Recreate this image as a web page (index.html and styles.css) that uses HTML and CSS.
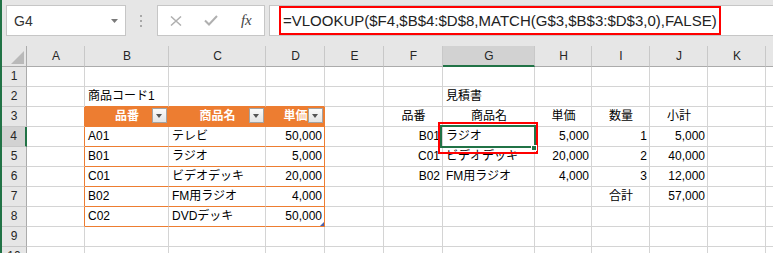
FILE: index.html
```html
<!DOCTYPE html>
<html lang="ja">
<head>
  <meta charset="UTF-8">
  <title>VLOOKUP MATCH</title>
  <link rel="stylesheet" href="styles.css">
</head>
<body>
  <div class="fbar">
    <div class="namebox">
      <span>G4</span>
      <svg width="7" height="4" viewBox="0 0 7 4"><polygon points="0,0 7,0 3.5,4" fill="#7a7a7a"/></svg>
    </div>
    <div class="grip">
      <svg width="3" height="12" viewBox="0 0 3 12"><rect x="0" y="0" width="2" height="2" fill="#a8a8a8"/><rect x="0" y="5" width="2" height="2" fill="#a8a8a8"/><rect x="0" y="10" width="2" height="2" fill="#a8a8a8"/></svg>
    </div>
    <div class="fbtns">
      <span><svg width="12" height="10" viewBox="0 0 12 10"><path d="M1 0.5 L11 9.5 M11 0.5 L1 9.5" stroke="#b0b0b0" stroke-width="1.5" fill="none"/></svg></span>
      <span><svg width="14" height="11" viewBox="0 0 14 11"><path d="M1 5.5 L5 9.5 L13 1" stroke="#b0b0b0" stroke-width="2" fill="none"/></svg></span>
      <span class="fx">fx</span>
    </div>
    <div class="finput">
      <div class="formula">=VLOOKUP($F4,$B$4:$D$8,MATCH(G$3,$B$3:$D$3,0),FALSE)</div>
    </div>
  </div>

  <div class="sheet">
    <div class="cell corner"><svg width="13" height="13" viewBox="0 0 13 13"><polygon points="13,0 13,13 0,13" fill="#b9b9b9"/></svg></div>
    <div class="cell hd">A</div><div class="cell hd">B</div><div class="cell hd">C</div><div class="cell hd">D</div><div class="cell hd">E</div><div class="cell hd">F</div><div class="cell hd sel">G</div><div class="cell hd">H</div><div class="cell hd">I</div><div class="cell hd">J</div><div class="cell hd">K</div><div class="cell hd end"></div>

    <div class="cell rh">1</div>
    <div class="cell"></div><div class="cell"></div><div class="cell"></div><div class="cell"></div><div class="cell"></div><div class="cell"></div><div class="cell"></div><div class="cell"></div><div class="cell"></div><div class="cell"></div><div class="cell"></div><div class="cell end"></div>

    <div class="cell rh">2</div>
    <div class="cell"></div><div class="cell tb-top">商品コード1</div><div class="cell tb-top"></div><div class="cell tb-top"></div><div class="cell"></div><div class="cell"></div><div class="cell">見積書</div><div class="cell"></div><div class="cell"></div><div class="cell"></div><div class="cell"></div><div class="cell end"></div>

    <div class="cell rh">3</div>
    <div class="cell tb-left"></div>
    <div class="cell tb-head">品番<span class="dd"></span></div>
    <div class="cell tb-head">商品名<span class="dd"></span></div>
    <div class="cell tb-head">単価<span class="dd"></span></div>
    <div class="cell"></div><div class="cell ctr">品番</div><div class="cell ctr">商品名</div><div class="cell ctr">単価</div><div class="cell ctr">数量</div><div class="cell ctr">小計</div><div class="cell"></div><div class="cell end"></div>

    <div class="cell rh rsel">4</div>
    <div class="cell tb-left"></div><div class="cell tb-row">A01</div><div class="cell tb-row">テレビ</div><div class="cell tb-row tb-end num">50,000</div>
    <div class="cell"></div><div class="cell num">B01</div>
    <div class="cell active">ラジオ<span class="handle"></span></div>
    <div class="cell num">5,000</div><div class="cell num">1</div><div class="cell num">5,000</div><div class="cell"></div><div class="cell end"></div>

    <div class="cell rh">5</div>
    <div class="cell tb-left"></div><div class="cell tb-row">B01</div><div class="cell tb-row">ラジオ</div><div class="cell tb-row tb-end num">5,000</div>
    <div class="cell"></div><div class="cell num">C01</div><div class="cell">ビデオデッキ</div><div class="cell num">20,000</div><div class="cell num">2</div><div class="cell num">40,000</div><div class="cell"></div><div class="cell end"></div>

    <div class="cell rh">6</div>
    <div class="cell tb-left"></div><div class="cell tb-row">C01</div><div class="cell tb-row">ビデオデッキ</div><div class="cell tb-row tb-end num">20,000</div>
    <div class="cell"></div><div class="cell num">B02</div><div class="cell">FM用ラジオ</div><div class="cell num">4,000</div><div class="cell num">3</div><div class="cell num">12,000</div><div class="cell"></div><div class="cell end"></div>

    <div class="cell rh">7</div>
    <div class="cell tb-left"></div><div class="cell tb-row">B02</div><div class="cell tb-row">FM用ラジオ</div><div class="cell tb-row tb-end num">4,000</div>
    <div class="cell"></div><div class="cell"></div><div class="cell"></div><div class="cell"></div><div class="cell ctr">合計</div><div class="cell num">57,000</div><div class="cell"></div><div class="cell end"></div>

    <div class="cell rh">8</div>
    <div class="cell tb-left"></div><div class="cell tb-row">C02</div><div class="cell tb-row">DVDデッキ</div><div class="cell tb-row tb-end num">50,000<span class="resize"></span></div>
    <div class="cell"></div><div class="cell"></div><div class="cell"></div><div class="cell"></div><div class="cell"></div><div class="cell"></div><div class="cell"></div><div class="cell end"></div>

    <div class="cell rh">9</div>
    <div class="cell"></div><div class="cell"></div><div class="cell"></div><div class="cell"></div><div class="cell"></div><div class="cell"></div><div class="cell"></div><div class="cell"></div><div class="cell"></div><div class="cell"></div><div class="cell"></div><div class="cell end"></div>

    <div class="cell rh">10</div>
    <div class="cell"></div><div class="cell"></div><div class="cell"></div><div class="cell"></div><div class="cell"></div><div class="cell"></div><div class="cell"></div><div class="cell"></div><div class="cell"></div><div class="cell"></div><div class="cell"></div><div class="cell end"></div>
  </div>
</body>
</html>
```

FILE: styles.css
```css
* {
  box-sizing: border-box;
}
body {
  margin: 0;
  height: 100vh;
  overflow: hidden;
  background: #fff;
  border-left: 2px solid #217346;
  font-family: "Liberation Sans", "Noto Sans CJK JP", sans-serif;
}

/* formula bar */
.fbar {
  display: flex;
  align-items: flex-start;
  height: 46px;
  padding-top: 5px;
  background: #e6e6e6;
}
.namebox {
  display: flex;
  align-items: center;
  justify-content: space-between;
  width: 120px;
  height: 31px;
  margin-left: 4px;
  padding: 0 7px 0 7px;
  background: #fff;
  border: 1px solid #c6c6c6;
  font-size: 14px;
  color: #333;
}
.grip {
  display: flex;
  align-items: center;
  justify-content: center;
  width: 31px;
  height: 31px;
}
.fbtns {
  display: flex;
  width: 108px;
  height: 31px;
  background: #fff;
  border: 1px solid #c6c6c6;
}
.fbtns span {
  display: flex;
  align-items: center;
  justify-content: center;
  width: 36px;
}
.fbtns .fx {
  font: italic 15px "Liberation Serif", serif;
  color: #444;
}
.finput {
  flex: 1;
  height: 31px;
  margin-left: 4px;
  padding-left: 9px;
  background: #fff;
  border: 1px solid #c6c6c6;
  border-right: 0;
}
.formula {
  display: inline-flex;
  align-items: center;
  height: 29px;
  padding: 0 2px;
  border: 2px solid #f00;
  font-size: 15px;
  color: #222;
}

/* grid */
.sheet {
  display: grid;
  grid-template-columns: 25px 58px 84px 97px 59px 59px 59px 92px 57px 58px 58px 58px 1fr;
  grid-template-rows: 21px;
  grid-auto-rows: 20px;
  font-size: 12px;
}
.cell {
  padding: 0 2px 0 3px;
  border-right: 1px solid #d4d4d4;
  border-bottom: 1px solid #d4d4d4;
  line-height: 19px;
  white-space: nowrap;
  color: #000;
}
.cell.end {
  border-right: 0;
}
.num {
  text-align: right;
}
.ctr {
  text-align: center;
}
.hd {
  background: #e6e6e6;
  border-right-color: #c8c8c8;
  border-bottom-color: #ababab;
  text-align: center;
  line-height: 20px;
  color: #262626;
}
.hd.sel {
  background: #d2d2d2;
  border-bottom: 2px solid #217346;
}
.corner {
  display: flex;
  align-items: flex-end;
  justify-content: flex-end;
  padding: 0 2px 2px 0;
  background: #e6e6e6;
  border-right-color: #ababab;
  border-bottom-color: #ababab;
}
.rh {
  padding: 0;
  background: #e6e6e6;
  border-right-color: #ababab;
  border-bottom-color: #c8c8c8;
  text-align: center;
  color: #262626;
}
.rh.rsel {
  background: #d2d2d2;
  border-right: 2px solid #217346;
}

/* table B3:D8 */
.tb-top {
  border-bottom-color: #ed7d31;
}
.tb-left {
  border-right-color: #ed7d31;
}
.tb-head {
  position: relative;
  background: #ed7d31;
  border-right-color: #ed7d31;
  border-bottom-color: #ed7d31;
  color: #fff;
  font-weight: bold;
  text-align: center;
}
.tb-row {
  border-bottom-color: #ed7d31;
}
.tb-end {
  position: relative;
  border-right-color: #ed7d31;
}
.dd {
  position: absolute;
  top: 1px;
  right: 1px;
  width: 15px;
  height: 15px;
  border: 1px solid #a3a3a3;
  background: linear-gradient(#fbfbfb, #e4e4e4);
}
.dd::after {
  content: "";
  position: absolute;
  left: 3px;
  top: 5px;
  border-left: 3.5px solid transparent;
  border-right: 3.5px solid transparent;
  border-top: 4px solid #555;
}
.resize {
  position: absolute;
  right: 0;
  bottom: 0;
  border-left: 4px solid transparent;
  border-bottom: 4px solid #4a64b0;
}

/* active cell G4 */
.active {
  position: relative;
}
.active::before {
  content: "";
  position: absolute;
  left: -3px;
  top: -2px;
  right: -2px;
  bottom: -2px;
  border: 2px solid #217346;
  z-index: 1;
}
.active::after {
  content: "";
  position: absolute;
  left: -5px;
  top: -5px;
  right: -4px;
  bottom: -8px;
  border: 2px solid #f00;
  z-index: 2;
}
.handle {
  position: absolute;
  right: -3px;
  bottom: -5px;
  width: 6px;
  height: 6px;
  background: #217346;
  border: 1px solid #fff;
  z-index: 3;
}
```
